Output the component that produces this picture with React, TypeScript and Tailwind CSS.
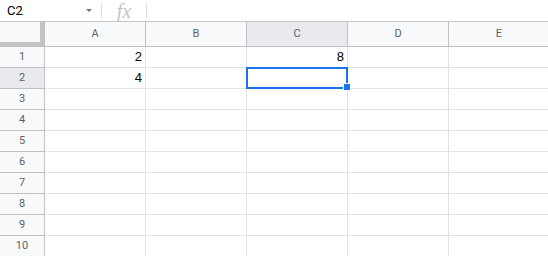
const COLS = ["A", "B", "C", "D", "E"];
const ROWS = [1, 2, 3, 4, 5, 6, 7, 8, 9, 10];

const values: Record<string, string> = {
  A1: "2",
  A2: "4",
  C1: "8",
};

export default function App() {
  return (
    <div className="h-[256px] w-[548px] overflow-hidden bg-white font-['Roboto','Liberation_Sans',sans-serif]">
      {/* formula bar */}
      <div className="flex h-[22px] items-center border-b border-[#c4c7c5]">
        <div className="flex h-full w-[101px] items-center justify-between pl-[7px] pr-[9px]">
          <span className="text-[13px] leading-none text-black">C2</span>
          <span className="h-0 w-0 border-x-[3px] border-t-[3px] border-x-transparent border-t-[#777]" />
        </div>
        <div className="h-[15px] w-px bg-[#e0e0e0]" />
        <div className="flex w-[44px] items-center justify-center">
          <span className="font-['Liberation_Serif',serif] text-[20px] italic leading-none text-[#c4c4c4]">fx</span>
        </div>
        <div className="h-[15px] w-px bg-[#e0e0e0]" />
      </div>

      <div className="grid grid-cols-[45px_repeat(5,101px)]">
        {/* header row */}
        <div className="relative h-[25px] border-r border-b border-[#c0c0c0] bg-[#f8f9fa]">
          <div className="absolute top-0 right-0 h-full w-[4px] bg-[#c4c4c4]" />
          <div className="absolute bottom-0 left-0 h-[4px] w-full bg-[#c4c4c4]" />
        </div>
        {COLS.map((c) => (
          <div
            key={c}
            className={`flex h-[25px] items-center justify-center border-r border-b border-[#c0c0c0] text-[11px] text-[#5f6368] ${
              c === "C" ? "bg-[#e8eaed]" : "bg-[#f8f9fa]"
            }`}
          >
            {c}
          </div>
        ))}

        {ROWS.map((r) => (
          <Row key={r} r={r} />
        ))}
      </div>
    </div>
  );
}

function Row({ r }: { r: number }) {
  return (
    <>
      <div
        className={`flex h-[21px] items-center justify-center border-r border-b border-[#c0c0c0] text-[11px] text-[#5f6368] ${
          r === 2 ? "bg-[#e8eaed]" : "bg-[#f8f9fa]"
        }`}
      >
        {r}
      </div>
      {COLS.map((c) => {
        const id = `${c}${r}`;
        const selected = id === "C2";
        return (
          <div
            key={id}
            className="relative flex h-[21px] items-center justify-end border-r border-b border-[#e2e3e3] pr-[3px] font-['Liberation_Sans',sans-serif] text-[13px] text-black"
          >
            {values[id] ?? ""}
            {selected ? (
              <>
                <div className="absolute -top-px -right-px -bottom-px -left-px border-2 border-[#1a73e8]" />
                <div className="absolute -right-[4px] -bottom-[3px] z-10 h-[8px] w-[8px] border border-white bg-[#1a73e8]" />
              </>
            ) : null}
          </div>
        );
      })}
    </>
  );
}
